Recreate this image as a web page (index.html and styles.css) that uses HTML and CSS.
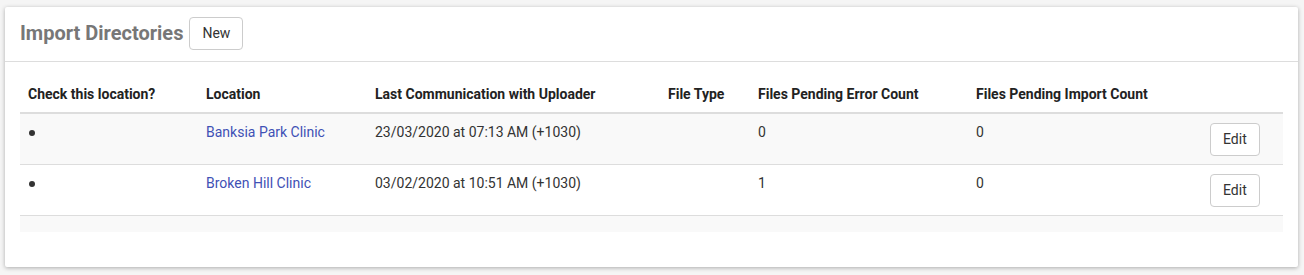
FILE: index.html
```html
<!DOCTYPE html>
<html lang="en">
<head>
  <meta charset="UTF-8" />
  <title>Import Directories</title>
  <link rel="stylesheet" href="styles.css">
</head>
<body>
  <div class="card">
    <div class="card-header">
      <h2>Import Directories</h2>
      <button class="btn">New</button>
    </div>
    <div class="card-body">
      <table class="table">
        <thead>
          <tr>
            <th class="c1">Check this location?</th>
            <th class="c2">Location</th>
            <th class="c3">Last Communication with Uploader</th>
            <th class="c4">File Type</th>
            <th class="c5">Files Pending Error Count</th>
            <th class="c6">Files Pending Import Count</th>
            <th class="c7"></th>
          </tr>
        </thead>
        <tbody>
          <tr>
            <td><span class="dot"></span></td>
            <td><a href="#">Banksia Park Clinic</a></td>
            <td>23/03/2020 at 07:13 AM (+1030)</td>
            <td></td>
            <td>0</td>
            <td>0</td>
            <td><button class="btn">Edit</button></td>
          </tr>
          <tr>
            <td><span class="dot"></span></td>
            <td><a href="#">Broken Hill Clinic</a></td>
            <td>03/02/2020 at 10:51 AM (+1030)</td>
            <td></td>
            <td>1</td>
            <td>0</td>
            <td><button class="btn">Edit</button></td>
          </tr>
        </tbody>
      </table>
      <div class="table-foot"></div>
    </div>
  </div>
</body>
</html>
```

FILE: styles.css
```css
body {
  font-family: Roboto, "Liberation Sans", sans-serif;
  font-size: 14px;
  line-height: 20px;
  color: #333;
  background-color: #f5f5f5;
  margin: 0;
  padding: 7px 6px 8px 5px;
}
.card {
  background: white;
  border-radius: 2px;
  box-shadow: 0px 1px 4px rgba(0, 0, 0, 0.3);
  height: 260px;
  box-sizing: border-box;
}
.card-header {
  display: flex;
  align-items: center;
  gap: 6px;
  padding: 10px 15px 11px 15px;
  border-bottom: 1px solid #ddd;
}
h2 {
  margin: 0;
  font-size: 20px;
  font-weight: bold;
  color: #777;
  line-height: 33px;
}
.btn {
  font-family: Roboto, "Liberation Sans", sans-serif;
  font-size: 14px;
  line-height: 19px;
  color: #333;
  background: white;
  border: 1px solid #ccc;
  border-radius: 4px;
  padding: 6px 12px;
  cursor: pointer;
}
.card-body {
  padding: 14px 15px 15px 15px;
}
.table {
  width: 100%;
  border-collapse: collapse;
  table-layout: fixed;
}
.table th,
.table td {
  padding: 8px;
  text-align: left;
  vertical-align: top;
}
.table th {
  font-weight: bold;
  color: #222;
  border-bottom: 2px solid #ddd;
}
.table td {
  border-bottom: 1px solid #ddd;
}
.table tbody tr:nth-child(odd) {
  background: #f9f9f9;
}
.table td .btn {
  margin-top: 1px;
}
.c1 { width: 162px; }
.c2 { width: 153px; }
.c3 { width: 277px; }
.c4 { width: 74px; }
.c5 { width: 202px; }
.c6 { width: 218px; }
.c7 { width: 65px; }
a {
  color: #3f51b5;
  text-decoration: none;
}
.dot {
  display: inline-block;
  width: 6px;
  height: 6px;
  border-radius: 50%;
  background: #333;
  margin-left: 1px;
  vertical-align: 1px;
}
.table-foot {
  height: 16px;
  background: #f9f9f9;
}
```
